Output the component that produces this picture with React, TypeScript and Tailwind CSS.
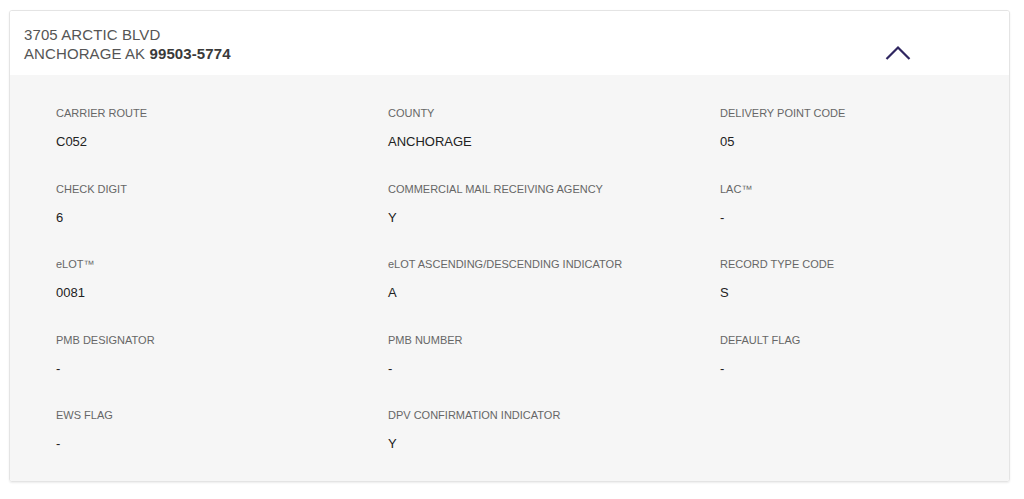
const fields: { label: string; value: string }[] = [
  { label: "CARRIER ROUTE", value: "C052" },
  { label: "COUNTY", value: "ANCHORAGE" },
  { label: "DELIVERY POINT CODE", value: "05" },
  { label: "CHECK DIGIT", value: "6" },
  { label: "COMMERCIAL MAIL RECEIVING AGENCY", value: "Y" },
  { label: "LAC™", value: "-" },
  { label: "eLOT™", value: "0081" },
  { label: "eLOT ASCENDING/DESCENDING INDICATOR", value: "A" },
  { label: "RECORD TYPE CODE", value: "S" },
  { label: "PMB DESIGNATOR", value: "-" },
  { label: "PMB NUMBER", value: "-" },
  { label: "DEFAULT FLAG", value: "-" },
  { label: "EWS FLAG", value: "-" },
  { label: "DPV CONFIRMATION INDICATOR", value: "Y" },
];

function Field({ label, value }: { label: string; value: string }) {
  return (
    <div className="h-[75.5px]">
      <div className="text-[11px] leading-4 text-[#666666]">{label}</div>
      <div className="mt-[12px] text-[13px] leading-[18px] text-[#222222]">{value}</div>
    </div>
  );
}

export default function App() {
  return (
    <div className="min-h-screen bg-white px-[9px] pt-[10px] font-['Liberation_Sans',Arial,sans-serif]">
      <div className="w-[1001px] overflow-hidden rounded-[3px] border border-[#e4e4e4] shadow-[0_1px_2px_rgba(0,0,0,0.08)]">
        <div className="flex items-start justify-between bg-white pl-[14px] pr-[98px] pt-[14px] pb-[12px]">
          <div className="text-[15px] leading-[19px] tracking-[0.1px] text-[#555555]">
            <div>3705 ARCTIC BLVD</div>
            <div>
              ANCHORAGE AK <span className="font-bold text-[#3a3a3a]">99503-5774</span>
            </div>
          </div>
          <svg width="26" height="16" viewBox="0 0 26 16" className="mt-[20px]">
            <path d="M1.5 14 L13 2.5 L24.5 14" fill="none" stroke="#2f2660" strokeWidth="2.2" />
          </svg>
        </div>
        <div className="grid h-[406px] grid-cols-[332px_332px_1fr] content-start bg-[#f6f6f6] pl-[46px] pt-[30px]">
          {fields.map((f) => (
            <Field key={f.label} label={f.label} value={f.value} />
          ))}
        </div>
      </div>
    </div>
  );
}
